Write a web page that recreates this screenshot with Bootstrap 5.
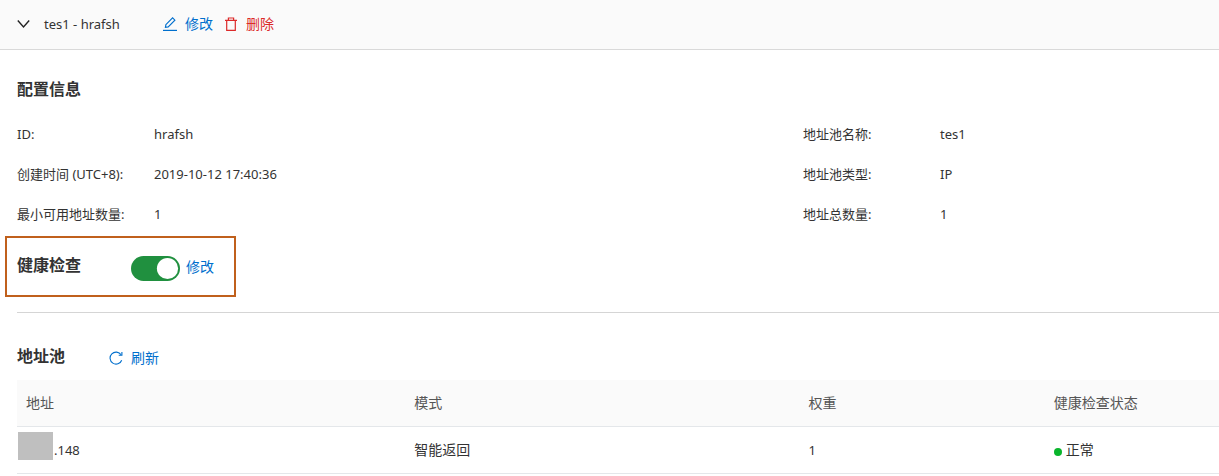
<!DOCTYPE html>
<html lang="zh-CN">
<head>
<meta charset="utf-8">
<meta name="viewport" content="width=device-width, initial-scale=1">
<title>tes1 - hrafsh</title>
<link href="https://cdn.jsdelivr.net/npm/bootstrap@5.3.0/dist/css/bootstrap.min.css" rel="stylesheet">
<style>
  body { font-family: "Noto Sans", "Noto Sans CJK SC", sans-serif; font-size: 13px; line-height: 20px; color: #333; }
  .pool-header { height: 50px; background: #fafafa; border-bottom: 1px solid #d9d9d9; padding: 0 0 2px 17px; }
  .pool-name { width: 105px; margin: 0 14px; }
  .act { display: inline-flex; align-items: center; gap: 8px; font-size: 14px; color: #006fcd; text-decoration: none; background: none; border: 0; padding: 0; }
  .act-danger { color: #dc2a2a; margin-left: 11px; }
  .act-refresh { margin: 3px 0 0 44px; }
  .act svg, .toggle-btn svg { flex: none; display: block; }
  .toggle-btn { background: none; border: 0; padding: 0; color: #222; }
  .pool-body { padding: 27px 0 0 17px; }
  .sec-title { font-size: 16px; line-height: 24px; font-weight: 700; margin: 0; }
  .info { display: grid; grid-template-columns: 65.4% 1fr; margin: 13px 0 2px; }
  .info-item { height: 40px; margin: 0; }
  .info-item dt { width: 137px; font-weight: 400; }
  .info-item dd { margin: 0; }
  .health { width: 231px; height: 61px; margin-left: -12px; padding-left: 10px; border: 2px solid #c0601c; }
  .health .sec-title { width: 114px; padding-bottom: 3px; }
  .form-switch .form-check-input { width: 49px; height: 25px; margin: 3px 6px 0 0; float: none; border: 0; background-color: #20903f; background-size: 25px 25px;
    background-image: url("data:image/svg+xml,%3csvg xmlns='http://www.w3.org/2000/svg' viewBox='0 0 25 25'%3e%3ccircle cx='12.5' cy='12.5' r='10.6' fill='%23fff'/%3e%3c/svg%3e"); }
  .form-switch .form-check-input:not(:checked) { background-color: #bfbfbf; }
  .divider { margin: 15px 0 31px; border-top: 1px solid #d5d5d5; opacity: 1; color: inherit; }
  .pool-table { margin: 12px 0 0; font-size: 14px; table-layout: fixed; color: #333; }
  .pool-table > :not(caption) > * > * { height: 47px; padding: 3px 9px 2px; border-bottom: 1px solid #e4e7ea; vertical-align: middle; color: #333; }
  .pool-table > thead > tr > th { height: 46px; background: #fafafa; font-weight: 400; color: #555; }
  .pool-table .addr { padding-left: 1px; }
  .latin { font-size: 13px; }
  .masked { width: 35px; height: 28px; background: #bfbfbf; margin: -9px 1px 0 0; }
  .dot { width: 8px; height: 8px; background: #0ab52c; margin: 4px 4px 0 0; }
</style>
</head>
<body>
<header class="pool-header d-flex align-items-center">
  <button class="toggle-btn" type="button" aria-label="收起">
    <svg width="13" height="14" viewBox="0 0 13 14" fill="none" stroke="currentColor" stroke-width="1.4"><path d="M.8 3.5 6.5 10l5.7-6.5"/></svg>
  </button>
  <span class="pool-name text-nowrap">tes1 - hrafsh</span>
  <div class="d-flex">
    <button class="act" type="button">
      <svg width="14" height="14" viewBox="0 0 14 14" fill="none" stroke="currentColor" stroke-width="1.1"><path d="M0 13.4h14" stroke-width="1.2"/><path d="m2.9 7.6 6.7-6.7 2.3 2.3-6.7 6.7-2.8.5z"/></svg>
      修改</button>
    <button class="act act-danger" type="button">
      <svg width="14" height="14" viewBox="0 0 14 14" fill="none" stroke="currentColor" stroke-width="1.2"><path d="M1 3.4h12M4.4 3V1h5.2v2M2.7 3.6v9.7h8.6V3.6"/></svg>
      删除</button>
  </div>
</header>
<main class="pool-body">
  <h2 class="sec-title">配置信息</h2>
  <div class="info">
    <dl class="info-item d-flex align-items-center"><dt>ID:</dt><dd>hrafsh</dd></dl>
    <dl class="info-item d-flex align-items-center"><dt>地址池名称:</dt><dd>tes1</dd></dl>
    <dl class="info-item d-flex align-items-center"><dt>创建时间 (UTC+8):</dt><dd>2019-10-12 17:40:36</dd></dl>
    <dl class="info-item d-flex align-items-center"><dt>地址池类型:</dt><dd>IP</dd></dl>
    <dl class="info-item d-flex align-items-center"><dt>最小可用地址数量:</dt><dd>1</dd></dl>
    <dl class="info-item d-flex align-items-center"><dt>地址总数量:</dt><dd>1</dd></dl>
  </div>
  <section class="health d-flex align-items-center">
    <h2 class="sec-title"><label for="health-check">健康检查</label></h2>
    <div class="form-switch p-0 d-flex">
      <input class="form-check-input" type="checkbox" role="switch" id="health-check" checked>
    </div>
    <a class="act" href="#">修改</a>
  </section>
  <hr class="divider">
  <div class="d-flex align-items-center">
    <h2 class="sec-title">地址池</h2>
    <button class="act act-refresh" type="button">
      <svg width="14" height="14" viewBox="0 0 14 14" fill="none" stroke="currentColor" stroke-width="1.1"><path d="M12.7 9.2a6 6 0 1 1-.6-5.4"/><path d="M12.9 1v3.3H9.7"/></svg>
      刷新</button>
  </div>
  <table class="table pool-table">
    <colgroup><col style="width:32.3%"><col style="width:32.8%"><col style="width:20.4%"><col></colgroup>
    <thead><tr><th scope="col">地址</th><th scope="col">模式</th><th scope="col">权重</th><th scope="col">健康检查状态</th></tr></thead>
    <tbody><tr>
      <td class="addr"><div class="d-flex align-items-center"><span class="masked"></span><span class="latin">.148</span></div></td>
      <td>智能返回</td>
      <td class="latin">1</td>
      <td><div class="d-flex align-items-center"><span class="dot rounded-circle"></span>正常</div></td>
    </tr></tbody>
  </table>
</main>
<script src="https://cdn.jsdelivr.net/npm/bootstrap@5.3.0/dist/js/bootstrap.bundle.min.js"></script>
</body>
</html>
